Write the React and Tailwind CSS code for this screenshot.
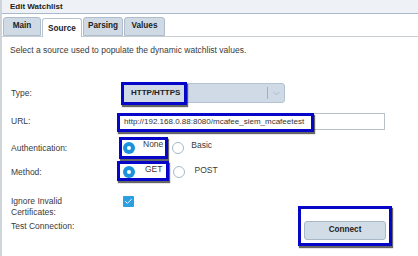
import { ChevronDown, Check } from "lucide-react";

const mark =
  "absolute border-[3px] border-[#0606c8] shadow-[1px_2px_1px_rgba(0,0,0,0.6)] pointer-events-none";

function Radio({ on }) {
  return on ? (
    <span className="w-[12px] h-[12px] shrink-0 rounded-full bg-[#1c92dc] flex items-center justify-center">
      <span className="block w-[4px] h-[4px] rounded-full bg-white" />
    </span>
  ) : (
    <span className="block w-[12px] h-[12px] shrink-0 rounded-full border border-[#a8b8c8] bg-white" />
  );
}

function Tab({ label, active }) {
  return (
    <div
      className={
        active
          ? "h-[19px] bg-white border border-b-0 border-[#b7c3cf] rounded-t-[3px] flex items-center justify-center pt-[3px] -mb-px"
          : "h-[19px] bg-[#cfdae5] border border-[#aebccb] rounded-t-[3px] flex items-center justify-center"
      }
      style={{ width: label === "Main" ? 38 : label === "Values" ? 41 : 40 }}
    >
      <span className="font-bold text-[8.2px] text-[#222]">{label}</span>
    </div>
  );
}

export default function App() {
  return (
    <div className="w-[418px] h-[256px] bg-white overflow-hidden font-['Liberation_Sans',Arial,sans-serif] text-[8.5px] text-[#3a3a3a] border-l-2 border-l-[#cfd4d9]">
      <div className="h-[14px] bg-[#eef2f6] border-b border-[#a8bacb] pl-[8px] flex items-center">
        <span className="font-bold text-[8px] text-[#222]">Edit Watchlist</span>
      </div>

      <div className="pt-[3px] pl-[1px] flex gap-[1px] border-b border-[#c9ced3] h-[23px] items-end">
        <Tab label="Main" />
        <Tab label="Source" active />
        <Tab label="Parsing" />
        <Tab label="Values" />
      </div>

      <p className="mt-[8px] pl-[8px] leading-[10px]">
        Select a source used to populate the dynamic watchlist values.
      </p>

      <div className="pl-[9px]">
        <div className="flex items-center h-[20px] mt-[28px]">
          <div className="w-[106px]">Type:</div>
          <div className="relative ml-[5px] w-[163px] h-[20px] bg-[#cfdae6] border border-[#b4c3d2] rounded-[3px] flex items-center">
            <span className="pl-[8px] font-bold text-[8px] text-[#222] flex-1">HTTP/HTTPS</span>
            <span className="w-px h-[12px] bg-[#9fb0c1]" />
            <span className="w-[16px] flex justify-center text-[#9aaabb]">
              <ChevronDown size={11} strokeWidth={1.5} />
            </span>
            <span className={mark + " -left-[2px] -top-[2px] w-[66px] h-[23px]"} />
          </div>
        </div>

        <div className="flex items-center h-[17px] mt-[10px]">
          <div className="w-[106px]">URL:</div>
          <div className="relative w-[268px] h-[17px] border border-[#b9c0c7] bg-white flex items-center pl-[6px] text-[8px] text-[#333]">
            http://192.168.0.88:8080/mcafee_siem_mcafeetest
            <span className={mark + " -left-px -top-px w-[197px] h-[19px]"} />
          </div>
        </div>

        <div className="flex items-center h-[20px] mt-[8px]">
          <div className="w-[106px]">Authentication:</div>
          <div className="relative flex items-center h-[20px]">
            <span className="ml-[6px]">
              <Radio on />
            </span>
            <span className="ml-[8px] -mt-[7px]">None</span>
            <span className="ml-[9px]">
              <Radio />
            </span>
            <span className="ml-[7px] -mt-[5px]">Basic</span>
            <span className={mark + " left-[2px] -top-px w-[49px] h-[22px]"} />
          </div>
        </div>

        <div className="flex items-center h-[20px] mt-[4px]">
          <div className="w-[106px]">Method:</div>
          <div className="relative flex items-center h-[20px]">
            <span className="ml-[6px]">
              <Radio on />
            </span>
            <span className="ml-[10px] -mt-[5px]">GET</span>
            <span className="ml-[11px]">
              <Radio />
            </span>
            <span className="ml-[9px] -mt-[4px]">POST</span>
            <span className={mark + " left-0 -top-px w-[52px] h-[20px]"} />
          </div>
        </div>

        <div className="flex items-start mt-[14px]">
          <div className="w-[106px] leading-[11px]">
            Ignore Invalid
            <br />
            Certificates:
          </div>
          <span className="ml-[6px] w-[11px] h-[11px] bg-[#2c9fe2] rounded-[1px] flex items-center justify-center text-white">
            <Check size={9} strokeWidth={2.5} />
          </span>
        </div>

        <div className="flex items-start mt-[3px]">
          <div className="w-[106px] leading-[10px]">Test Connection:</div>
          <div className="w-[269px] flex justify-end">
            <div className="relative">
              <button className="w-[82px] h-[19px] bg-[#d2dce7] border border-[#a9b8c7] rounded-[3px] font-bold text-[8.2px] text-[#222]">
                Connect
              </button>
              <span className={mark + " -left-[6px] -top-[15px] w-[94px] h-[40px]"} />
            </div>
          </div>
        </div>
      </div>
    </div>
  );
}
